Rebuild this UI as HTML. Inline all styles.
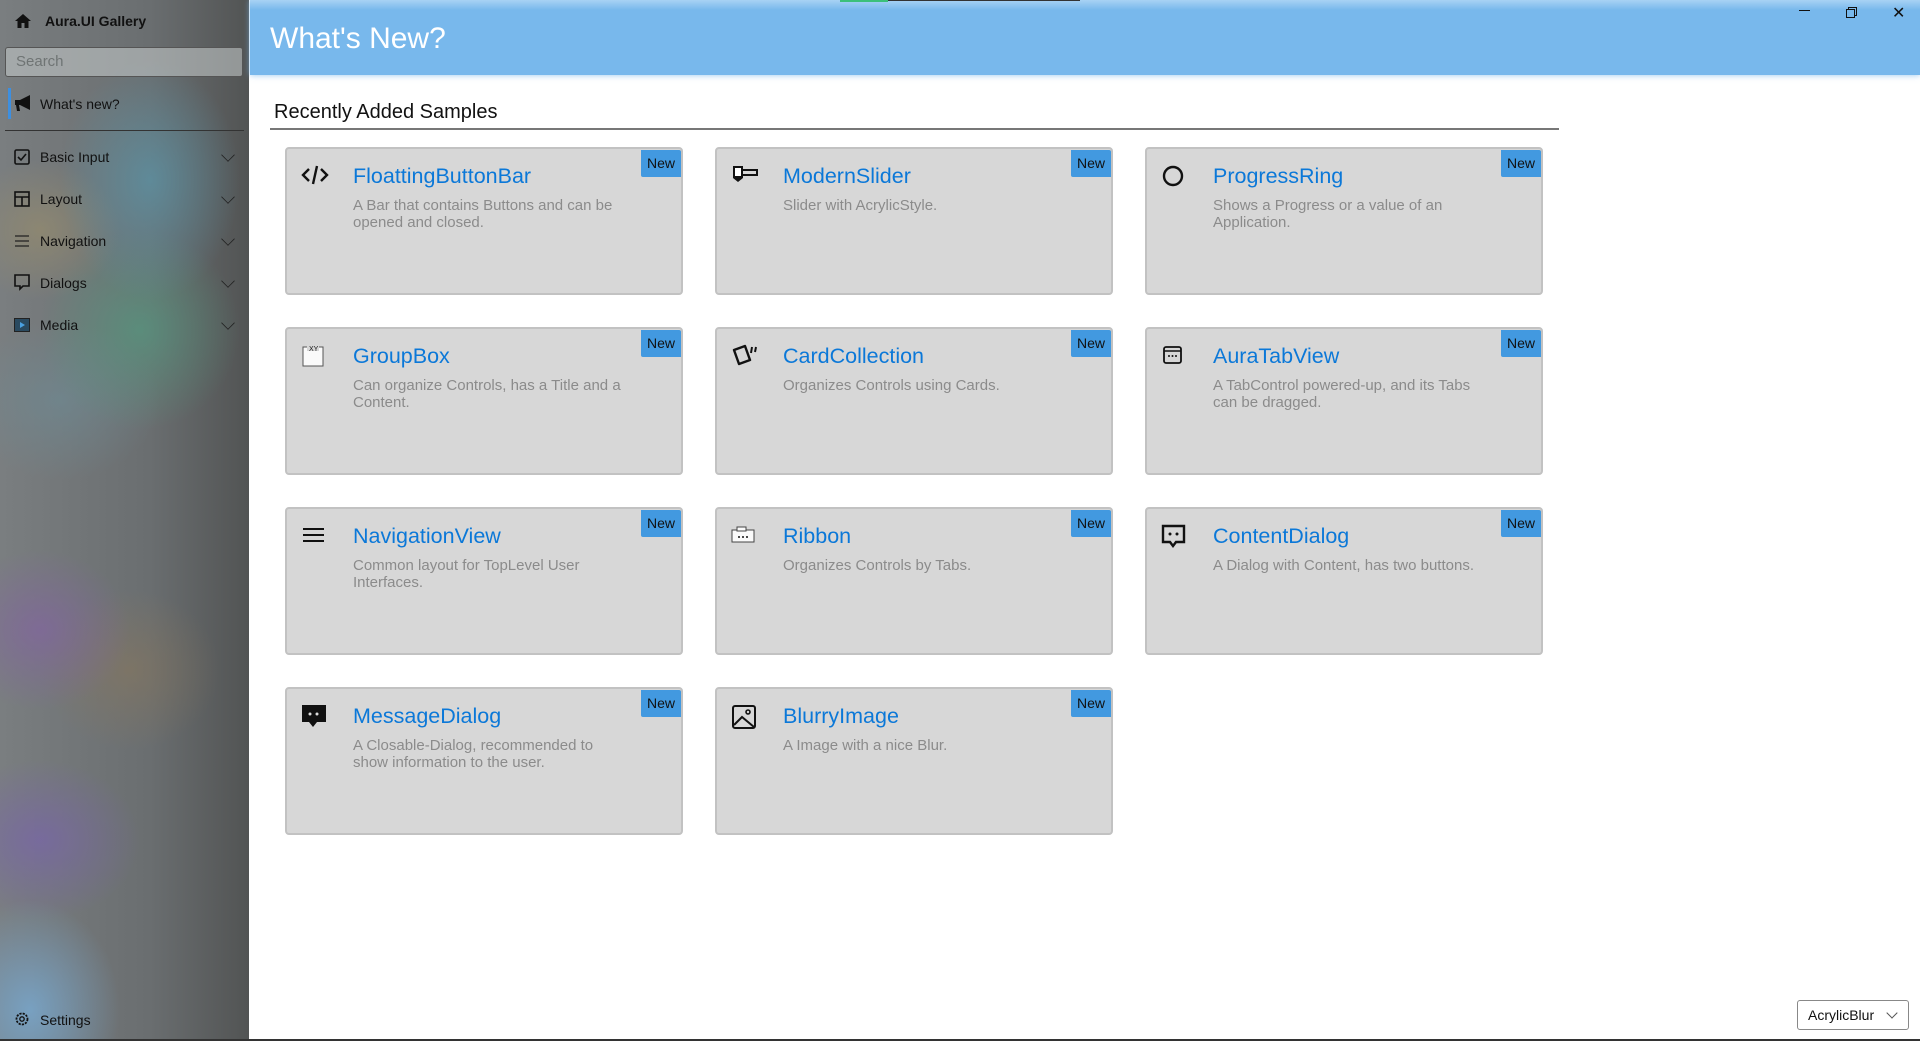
<!DOCTYPE html>
<html><head><meta charset="utf-8"><style>
*{box-sizing:border-box;margin:0;padding:0}
body{width:1920px;height:1041px;overflow:hidden;background:#fff;font-family:"Liberation Sans",sans-serif;position:relative}
#side{position:absolute;left:0;top:0;width:249px;height:1041px;overflow:hidden;
background:
radial-gradient(ellipse 90px 110px at 30px 1010px,rgba(120,170,210,.8),transparent),
radial-gradient(ellipse 100px 80px at 40px 840px,rgba(120,100,170,.7),transparent),
radial-gradient(ellipse 90px 80px at 40px 630px,rgba(130,100,160,.7),transparent),
radial-gradient(ellipse 90px 80px at 130px 670px,rgba(140,120,90,.5),transparent),
radial-gradient(ellipse 90px 120px at 150px 180px,rgba(90,150,170,.7),transparent),
radial-gradient(ellipse 80px 70px at 40px 230px,rgba(150,140,110,.7),transparent),
radial-gradient(ellipse 100px 100px at 140px 330px,rgba(80,160,130,.6),transparent),
radial-gradient(ellipse 100px 80px at 60px 400px,rgba(110,140,150,.6),transparent),
linear-gradient(90deg,#7a7e80,#6a6e70 60%,#525454)}
.si{position:absolute;left:0;width:249px;font-size:14px;color:#111}
.si span{position:absolute;left:40px}
.si .chev{position:absolute;left:222px;width:12px;height:12px;border-right:1.6px solid #222;border-bottom:1.6px solid #222;transform:rotate(45deg) scale(.8)}
#hdr{position:absolute;left:250px;top:0;width:1670px;height:75px;background:linear-gradient(#a8d2f4,#78b8ec 10px);box-shadow:0 0 6px rgba(120,184,236,.8)}
#hdr h1{position:absolute;left:20px;top:22px;font-weight:normal;color:#fff;font-size:30px}
.card{position:absolute;width:398px;height:148px;background:#d7d7d7;border:2px solid #c2c2c2;border-radius:4px}
.card .b{position:absolute;right:0;top:1px;width:40px;height:27px;background:#4299e0;color:#111;font-size:14px;line-height:27px;text-align:center;border-radius:0 2px 0 2px}
.card .t{position:absolute;left:66px;top:15px;font-size:21.5px;color:#0b78d8}
.card .d{position:absolute;left:66px;top:48px;font-size:15px;line-height:17px;color:#8b8b8b;width:274px}
.card svg{position:absolute;left:14px;top:15px}
</style></head><body>
<div id="side">
 <svg style="position:absolute;left:14px;top:13px" width="18" height="16" viewBox="0 0 18 16"><path d="M9 1L1 8h2.5v7h4v-5h3v5h4V8H17z" fill="#111"/></svg>
 <div class="si" style="top:13px;font-weight:bold;font-size:14px"><span style="left:45px">Aura.UI Gallery</span></div>
 <div style="position:absolute;left:5px;top:47px;width:238px;height:30px;border:1px solid #555;border-radius:3px;background:rgba(200,205,205,.55);color:#6f7474;font-size:15px;padding:5px 10px">Search</div>
 <div style="position:absolute;left:8px;top:88px;width:3px;height:31px;background:#3d8fe0"></div>
 <svg style="position:absolute;left:14px;top:94px" width="18" height="18" viewBox="0 0 18 18"><path d="M1 6h5l10-5v15L6 11H5l1 6H3l-1-6H1z" fill="#111"/></svg>
 <div class="si" style="top:96px"><span>What's new?</span></div>
 <div style="position:absolute;left:5px;top:130px;width:239px;height:1px;background:#333"></div>
 <svg style="position:absolute;left:14px;top:149px" width="16" height="16"><rect x="1" y="1" width="14" height="14" rx="1.5" fill="none" stroke="#111" stroke-width="1.6"/><path d="M4 8l3 3 5-6" fill="none" stroke="#111" stroke-width="1.6"/></svg>
 <div class="si" style="top:149px"><span>Basic Input</span><i class="chev" style="top:0px"></i></div>
 <svg style="position:absolute;left:14px;top:191px" width="16" height="16"><rect x="1" y="1" width="14" height="14" fill="none" stroke="#111" stroke-width="1.6"/><path d="M1 6h14M8 6v9" stroke="#111" stroke-width="1.6"/></svg>
 <div class="si" style="top:191px"><span>Layout</span><i class="chev" style="top:0px"></i></div>
 <svg style="position:absolute;left:14px;top:234px" width="16" height="14"><path d="M1 2h14M1 7h14M1 12h14" stroke="#222" stroke-width="1.2"/></svg>
 <div class="si" style="top:233px"><span>Navigation</span><i class="chev" style="top:0px"></i></div>
 <svg style="position:absolute;left:14px;top:274px" width="16" height="17"><path d="M1 1h14v11H9l-3 3v-3H1z" fill="none" stroke="#111" stroke-width="1.6"/></svg>
 <div class="si" style="top:275px"><span>Dialogs</span><i class="chev" style="top:0px"></i></div>
 <svg style="position:absolute;left:14px;top:318px" width="16" height="14"><rect x="0.5" y="0.5" width="15" height="13" fill="#2a4a60" stroke="#222"/><path d="M6 4l5 3-5 3z" fill="#4aa0e0"/></svg>
 <div class="si" style="top:317px"><span>Media</span><i class="chev" style="top:0px"></i></div>
 <svg style="position:absolute;left:14px;top:1011px" width="16" height="16" viewBox="0 0 16 16"><circle cx="8" cy="8" r="5.5" fill="none" stroke="#111" stroke-width="1.8" stroke-dasharray="2.2 1.1"/><circle cx="8" cy="8" r="2.2" fill="none" stroke="#111" stroke-width="1.3"/></svg>
 <div class="si" style="top:1012px"><span>Settings</span></div>
</div>
<div id="hdr"><h1>What's New?</h1>
 <div style="position:absolute;left:1549px;top:10px;width:11px;height:1px;background:#111"></div>
 <div style="position:absolute;left:1598px;top:7px;width:9px;height:9px;border:1px solid #111"></div>
 <div style="position:absolute;left:1596px;top:9px;width:9px;height:9px;border:1px solid #111;background:#78b8ec"></div>
 <div style="position:absolute;left:1642px;top:3px;font-size:16px;color:#111">✕</div>
</div>
<div style="position:absolute;left:840px;top:0;width:48px;height:2px;background:#3cc07a"></div>
<div style="position:absolute;left:888px;top:0;width:192px;height:1px;background:#333"></div>
<div style="position:absolute;left:274px;top:101px;font-size:20px;color:#111">Recently Added Samples</div>
<div style="position:absolute;left:270px;top:128px;width:1289px;height:2px;background:#777"></div>

<div class="card" style="left:285px;top:147px"><svg width="28" height="22" viewBox="0 0 28 22"><path d="M8 5L2 11l6 6M20 5l6 6-6 6M16 2l-4 18" fill="none" stroke="#111" stroke-width="2.4"/></svg><div class="b">New</div><div class="t">FloattingButtonBar</div><div class="d">A Bar that contains Buttons and can be opened and closed.</div></div>
<div class="card" style="left:715px;top:147px"><svg width="30" height="22" viewBox="0 0 30 22"><path d="M2 2h10v12l-5 4-5-4z" fill="#111"/><path d="M4 4h6v8H4z" fill="#fff"/><path d="M12 6h14v5H12" fill="none" stroke="#111" stroke-width="2"/></svg><div class="b">New</div><div class="t">ModernSlider</div><div class="d">Slider with AcrylicStyle.</div></div>
<div class="card" style="left:1145px;top:147px"><svg width="24" height="24"><circle cx="12" cy="12" r="9" fill="none" stroke="#111" stroke-width="2.4"/></svg><div class="b">New</div><div class="t">ProgressRing</div><div class="d">Shows a Progress or a value of an Application.</div></div>

<div class="card" style="left:285px;top:327px"><svg width="24" height="24" viewBox="0 0 24 24"><rect x="2" y="3" width="20" height="19" fill="#fafafa" stroke="#555"/><rect x="6" y="0" width="12" height="7" fill="#d7d7d7"/><text x="8" y="7" font-size="7" font-family="Liberation Sans" fill="#111">XY</text></svg><div class="b">New</div><div class="t">GroupBox</div><div class="d">Can organize Controls, has a Title and a Content.</div></div>
<div class="card" style="left:715px;top:327px"><svg width="28" height="24" viewBox="0 0 28 24"><path d="M3 6l11-4 5 14-11 4z" fill="none" stroke="#111" stroke-width="2.4" stroke-linejoin="round"/><path d="M21 3l-1 6M25 3l-1 5" stroke="#111" stroke-width="2"/></svg><div class="b">New</div><div class="t">CardCollection</div><div class="d">Organizes Controls using Cards.</div></div>
<div class="card" style="left:1145px;top:327px"><svg width="22" height="22" viewBox="0 0 22 22"><rect x="3" y="3" width="17" height="16" rx="2" fill="none" stroke="#111" stroke-width="1.8"/><path d="M3 7h17" stroke="#111" stroke-width="1.5"/><circle cx="8" cy="12" r="1" fill="#111"/><circle cx="11.5" cy="12" r="1" fill="#111"/><circle cx="15" cy="12" r="1" fill="#111"/></svg><div class="b">New</div><div class="t">AuraTabView</div><div class="d">A TabControl powered-up, and its Tabs can be dragged.</div></div>

<div class="card" style="left:285px;top:507px"><svg width="24" height="20"><path d="M2 5h21M2 11h21M2 17h21" stroke="#111" stroke-width="2"/></svg><div class="b">New</div><div class="t">NavigationView</div><div class="d">Common layout for TopLevel User Interfaces.</div></div>
<div class="card" style="left:715px;top:507px"><svg width="26" height="20" viewBox="0 0 26 20"><rect x="1" y="6" width="22" height="12" fill="#fafafa" stroke="#444"/><rect x="6" y="3" width="9" height="4" fill="#fafafa" stroke="#444"/><circle cx="8" cy="13" r="1" fill="#111"/><circle cx="12" cy="13" r="1" fill="#111"/><circle cx="16" cy="13" r="1" fill="#111"/></svg><div class="b">New</div><div class="t">Ribbon</div><div class="d">Organizes Controls by Tabs.</div></div>
<div class="card" style="left:1145px;top:507px"><svg width="26" height="26" viewBox="0 0 26 26"><path d="M2 2h21v16h-8l-3 4-3-4H2z" fill="none" stroke="#111" stroke-width="2.4"/><circle cx="9" cy="10" r="1.5" fill="#111"/><circle cx="16" cy="10" r="1.5" fill="#111"/></svg><div class="b">New</div><div class="t">ContentDialog</div><div class="d">A Dialog with Content, has two buttons.</div></div>

<div class="card" style="left:285px;top:687px"><svg width="26" height="26" viewBox="0 0 26 26"><path d="M1 1h24v17h-9l-4 5-4-5H1z" fill="#111"/><circle cx="9" cy="10" r="1.5" fill="#ddd"/><circle cx="16" cy="10" r="1.5" fill="#ddd"/></svg><div class="b">New</div><div class="t">MessageDialog</div><div class="d">A Closable-Dialog, recommended to show information to the user.</div></div>
<div class="card" style="left:715px;top:687px"><svg width="26" height="26" viewBox="0 0 26 26"><rect x="2" y="2" width="22" height="22" rx="2" fill="none" stroke="#111" stroke-width="2"/><path d="M3 21l8-8 12 10" fill="none" stroke="#111" stroke-width="2"/><circle cx="17" cy="8" r="2" fill="none" stroke="#111" stroke-width="1.6"/></svg><div class="b">New</div><div class="t">BlurryImage</div><div class="d">A Image with a nice Blur.</div></div>

<div style="position:absolute;left:1797px;top:1000px;width:112px;height:30px;border:1px solid #888;border-radius:3px;font-size:14px;color:#111;padding:6px 10px">AcrylicBlur<i style="position:absolute;right:12px;top:8px;width:8px;height:8px;border-right:1px solid #555;border-bottom:1px solid #555;transform:rotate(45deg)"></i></div>
<div style="position:absolute;left:0;top:1039px;width:1920px;height:2px;background:#333"></div>
</body></html>
